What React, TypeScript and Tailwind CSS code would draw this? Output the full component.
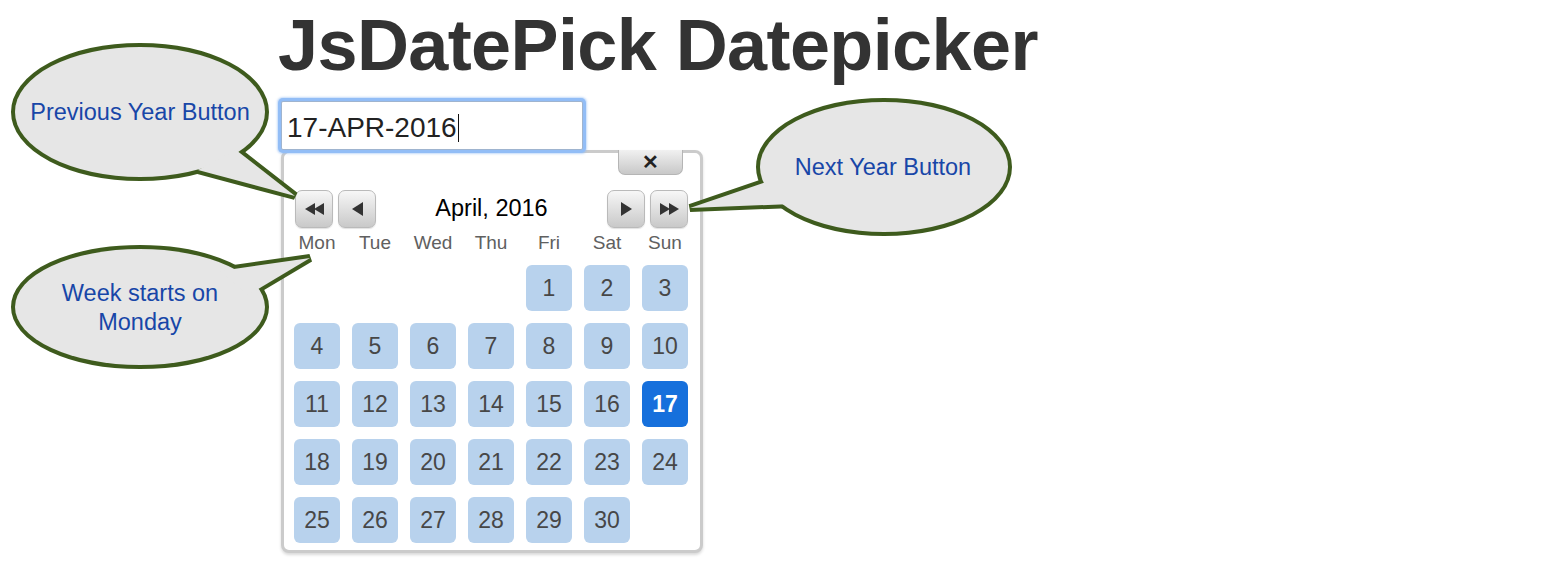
import React from 'react';

const WEEK = ['Mon', 'Tue', 'Wed', 'Thu', 'Fri', 'Sat', 'Sun'];
const LEAD = 4; // April 1st 2016 falls on a Friday
const DAYS = Array.from({ length: 30 }, (_, i) => i + 1);
const SELECTED = 17;

function NavButton({ children }: { children: React.ReactNode }) {
  return (
    <button className="w-[38px] h-[38px] flex items-center justify-center rounded-[7px] border border-[#bababa] bg-linear-to-b from-[#f7f7f7] to-[#c9c9c9] shadow-[0_1px_1px_rgba(0,0,0,0.12)]">
      {children}
    </button>
  );
}

function Arrow({ dir, double }: { dir: 'left' | 'right'; double?: boolean }) {
  const pts = double
    ? dir === 'left'
      ? ['0,6 10,0 10,12', '9,6 19,0 19,12']
      : ['0,0 10,6 0,12', '9,0 19,6 9,12']
    : dir === 'left'
      ? ['0,7 11,0 11,14']
      : ['0,0 11,7 0,14'];
  const w = double ? 19 : 11;
  const h = double ? 12 : 14;
  return (
    <svg width={w} height={h} viewBox={`0 0 ${w} ${h}`}>
      {pts.map((p) => (
        <polygon key={p} points={p} fill="#333" />
      ))}
    </svg>
  );
}

function Callouts() {
  const bubbles = [
    { cx: 140, cy: 112, rx: 125, ry: 65, tail: '236,150 295,196 198,170' },
    { cx: 884, cy: 167, rx: 124, ry: 65, tail: '772,180 690,208 792,204' },
    { cx: 140, cy: 307, rx: 125, ry: 58, tail: '220,271 310,258 248,295' },
  ];
  return (
    <svg className="absolute inset-0 pointer-events-none" width="1552" height="564">
      {bubbles.map((b, i) => (
        <g key={`s${i}`} stroke="#3e5b1d" strokeWidth="8" strokeLinejoin="miter" fill="none">
          <ellipse cx={b.cx} cy={b.cy} rx={b.rx} ry={b.ry} />
          <polygon points={b.tail} />
        </g>
      ))}
      {bubbles.map((b, i) => (
        <g key={`f${i}`} fill="#e6e6e6">
          <ellipse cx={b.cx} cy={b.cy} rx={b.rx} ry={b.ry} />
          <polygon points={b.tail} />
        </g>
      ))}
    </svg>
  );
}

export default function App() {
  return (
    <div className="relative w-[1552px] h-[564px] bg-white overflow-hidden font-['Liberation_Sans',Arial,sans-serif]">
      <div className="flex flex-col pl-[278px] pt-[9px]">
        <h1 className="text-[72px] leading-[72px] font-bold tracking-[-0.6px] text-[#333]">
          JsDatePick Datepicker
        </h1>

        <div className="ml-[3px] mt-[20px] flex flex-col items-start">
          <div className="relative z-10 w-[302px] h-[49px] bg-white border border-[#9fb4cf] rounded-[2px] shadow-[0_0_0_3px_#92bdf6,0_0_2px_4px_rgba(140,186,245,0.5)] pl-[5px] pt-[10px] text-[28px] leading-[32px] text-[#222] flex items-start">
            <span>17-APR-2016</span>
            <span className="inline-block w-[1.5px] h-[28px] bg-[#111] ml-[1px] mt-[2px]" />
          </div>

          <div className="w-[422px] border-[3px] border-[#cbcbcb] rounded-[8px] bg-white pl-[10px] pr-[12px] pb-[7px] shadow-[0_2px_3px_rgba(0,0,0,0.15)]">
            <div className="flex justify-end pr-[5px]">
              <button className="-mt-[3px] w-[65px] h-[25px] flex items-center justify-center rounded-b-[7px] border border-t-0 border-[#b5b5b5] bg-linear-to-b from-[#f1f1f1] to-[#c8c8c8] text-[20px] leading-none font-bold text-[#222]">
                ✕
              </button>
            </div>

            <div className="mt-[15px] h-[38px] flex items-center pl-[1px]">
              <div className="flex gap-[5px]">
                <NavButton>
                  <Arrow dir="left" double />
                </NavButton>
                <NavButton>
                  <Arrow dir="left" />
                </NavButton>
              </div>
              <div className="flex-1 text-center text-[23.5px] text-black">April, 2016</div>
              <div className="flex gap-[5px]">
                <NavButton>
                  <Arrow dir="right" />
                </NavButton>
                <NavButton>
                  <Arrow dir="right" double />
                </NavButton>
              </div>
            </div>

            <div className="mt-[1px] h-[28px] grid grid-cols-[repeat(7,46px)] gap-x-[12px] items-center">
              {WEEK.map((d) => (
                <span key={d} className="text-center text-[19px] text-[#606060]">
                  {d}
                </span>
              ))}
            </div>

            <div className="mt-[8px] grid grid-cols-[repeat(7,46px)] auto-rows-[46px] gap-[12px]">
              {Array.from({ length: LEAD }, (_, i) => (
                <span key={`e${i}`} />
              ))}
              {DAYS.map((d) => (
                <span
                  key={d}
                  className={
                    d === SELECTED
                      ? 'flex items-center justify-center rounded-[6px] bg-[#1670dc] text-white font-bold text-[23px]'
                      : 'flex items-center justify-center rounded-[6px] bg-[#b8d2ed] text-[#474747] text-[23px]'
                  }
                >
                  {d}
                </span>
              ))}
            </div>
          </div>
        </div>
      </div>

      <Callouts />

      <div className="absolute left-[15px] top-[98px] w-[250px] text-center text-[23.5px] leading-[29px] text-[#1846a8]">
        Previous Year Button
      </div>
      <div className="absolute left-[758px] top-[153px] w-[250px] text-center text-[23.5px] leading-[29px] text-[#1846a8]">
        Next Year Button
      </div>
      <div className="absolute left-[15px] top-[279px] w-[250px] text-center text-[23.5px] leading-[29px] text-[#1846a8]">
        Week starts on
        <br />
        Monday
      </div>
    </div>
  );
}
